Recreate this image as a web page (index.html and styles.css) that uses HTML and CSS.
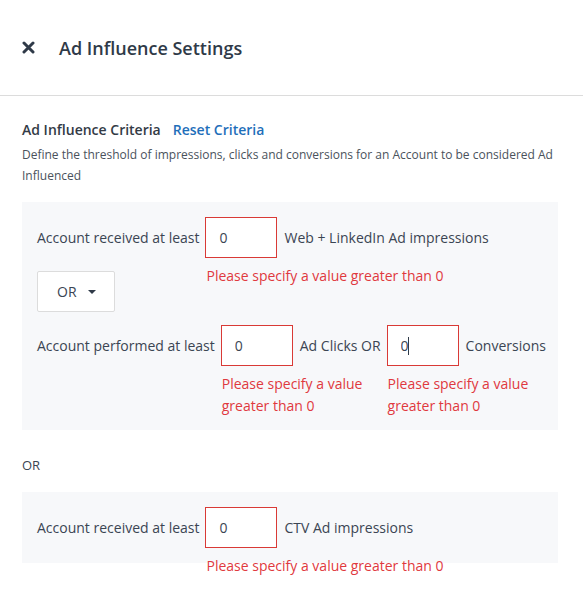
FILE: index.html
```html
<!DOCTYPE html>
<html>
<head>
<meta charset="utf-8">
<link rel="stylesheet" href="styles.css">
</head>
<body>
<header class="header">
  <svg class="close" width="13" height="13" viewBox="0 0 13 13"><path d="M2 2 L11 11 M11 2 L2 11" stroke="#2f3a48" stroke-width="3" stroke-linecap="round"/></svg>
  <h1 class="title">Ad Influence Settings</h1>
</header>
<main class="content">
  <div class="crit-head">
    <span class="crit-title">Ad Influence Criteria</span>
    <a class="reset">Reset Criteria</a>
  </div>
  <p class="desc">Define the threshold of impressions, clicks and conversions for an Account to be considered Ad Influenced</p>

  <section class="panel panel-main">
    <div class="row">
      <span class="label">Account received at least</span>
      <div class="field">
        <input class="num" type="text" value="0">
        <div class="error wide">Please specify a value greater than 0</div>
      </div>
      <span class="label">Web + LinkedIn Ad impressions</span>
    </div>
    <div class="select">
      <span>OR</span>
      <span class="caret"></span>
    </div>
    <div class="row">
      <span class="label">Account performed at least</span>
      <div class="field">
        <input class="num" type="text" value="0">
        <div class="error narrow">Please specify a value greater than 0</div>
      </div>
      <span class="label">Ad Clicks OR</span>
      <div class="field">
        <input class="num" type="text" value="0">
        <span class="cursor"></span>
        <div class="error narrow">Please specify a value greater than 0</div>
      </div>
      <span class="label">Conversions</span>
    </div>
  </section>

  <div class="or">OR</div>

  <section class="panel panel-ctv">
    <div class="row">
      <span class="label">Account received at least</span>
      <div class="field">
        <input class="num" type="text" value="0">
        <div class="error wide">Please specify a value greater than 0</div>
      </div>
      <span class="label">CTV Ad impressions</span>
    </div>
  </section>
</main>
</body>
</html>
```

FILE: styles.css
```css
* { box-sizing: border-box; }
body {
  margin: 0;
  font-family: "Open Sans", "Noto Sans", sans-serif;
  color: #3b4553;
  background: #fff;
}
.header {
  height: 96px;
  border-bottom: 1px solid #dcdcdc;
  display: flex;
  align-items: center;
  padding-left: 22px;
  gap: 24px;
}
.close { flex: none; }
.title {
  margin: 0;
  font-size: 18px;
  font-weight: 600;
  color: #2f3a48;
}
.content {
  padding: 24px 22px 40px 22px;
}
.crit-head {
  display: flex;
  gap: 12px;
  font-size: 14px;
  line-height: 20px;
  font-weight: 600;
}
.crit-title { color: #333b46; }
.reset { color: #1f6fba; cursor: pointer; }
.desc {
  margin: 4px 0 0 0;
  font-size: 12px;
  line-height: 21px;
  color: #4a525c;
}
.panel {
  background: #f7f8fa;
  width: 536px;
  padding: 15px 15px;
}
.panel-main {
  margin-top: 16px;
  padding-bottom: 64px;
}
.row {
  display: flex;
  align-items: center;
  gap: 6px;
  font-size: 14px;
}
.label { color: #3b4553; white-space: nowrap; }
.field { position: relative; }
.field + .label { margin-left: 1px; }
.num {
  display: block;
  width: 72px;
  height: 41px;
  border: 1px solid #d93a36;
  border-radius: 0;
  background: #fff;
  padding: 0 0 0 13px;
  font-family: inherit;
  font-size: 14px;
  color: #3b4553;
  outline: none;
}
.cursor {
  position: absolute;
  left: 21px;
  top: 12px;
  width: 1px;
  height: 18px;
  background: #2f3a48;
}
.error {
  position: absolute;
  left: 1px;
  top: 48px;
  color: #e0393e;
  font-size: 14px;
  line-height: 22px;
}
.error.wide { white-space: nowrap; }
.error.narrow { width: 150px; }
.select {
  margin: 13px 0;
  width: 78px;
  height: 41px;
  background: #fff;
  border: 1px solid #dcdcdc;
  border-radius: 2px;
  display: flex;
  align-items: center;
  padding-left: 19px;
  gap: 11px;
  font-size: 14px;
  color: #3b4553;
}
.caret {
  width: 0;
  height: 0;
  border-left: 4px solid transparent;
  border-right: 4px solid transparent;
  border-top: 4px solid #2f3a48;
}
.or {
  margin-top: 25px;
  font-size: 13px;
  line-height: 20px;
  color: #3b4553;
}
.panel-ctv {
  margin-top: 17px;
}
```
